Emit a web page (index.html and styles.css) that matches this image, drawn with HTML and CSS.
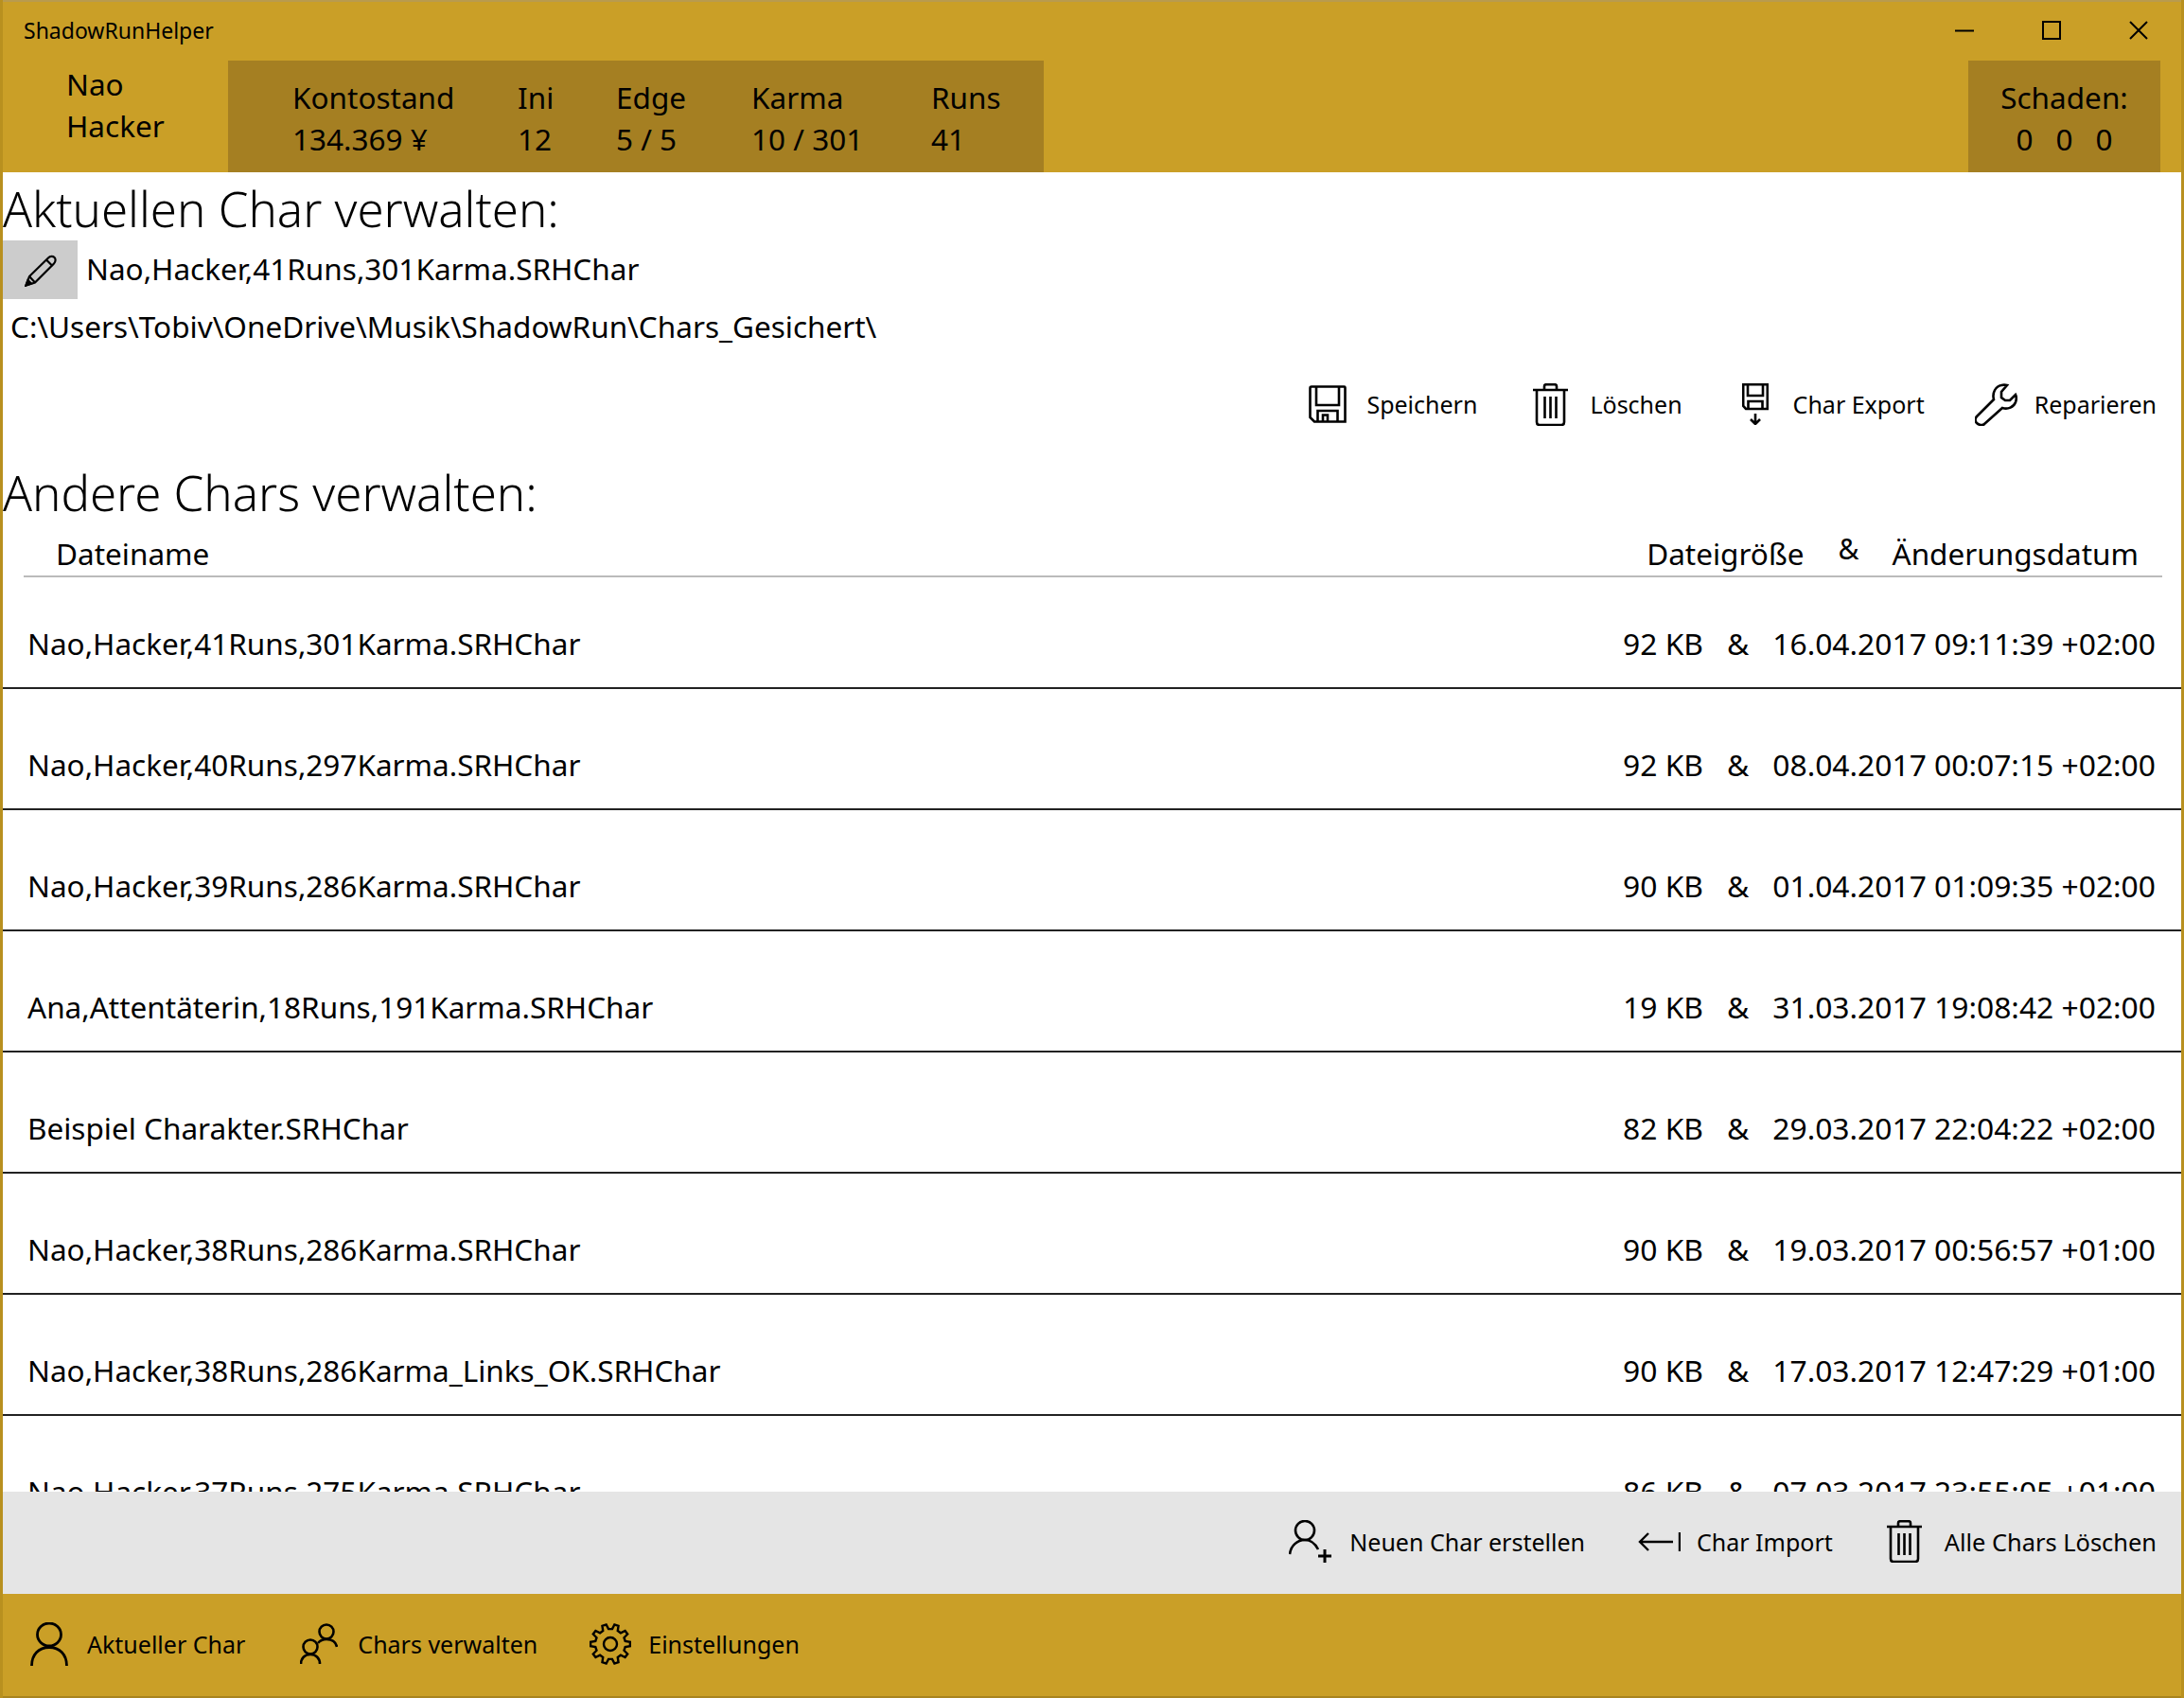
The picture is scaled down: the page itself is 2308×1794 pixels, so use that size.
FILE: index.html
```html
<!DOCTYPE html>
<html lang="de">
<head>
  <meta charset="UTF-8" />
  <title>ShadowRunHelper</title>
  <link rel="stylesheet" href="styles.css">
</head>
<body>
  <div class="window">

    <header class="top">
      <div class="title-row">
        <span class="app-title">ShadowRunHelper</span>
        <div class="win-buttons">
          <svg width="20" height="20" viewBox="0 0 20 20"><path d="M0 10.5H20" stroke="#000" stroke-width="2"/></svg>
          <svg width="20" height="20" viewBox="0 0 20 20"><rect x="1" y="1" width="18" height="18" fill="none" stroke="#000" stroke-width="2"/></svg>
          <svg width="20" height="20" viewBox="0 0 20 20"><path d="M1 1L19 19M19 1L1 19" stroke="#000" stroke-width="2"/></svg>
        </div>
      </div>
      <div class="stats-row">
        <div class="char-name">
          <div>Nao</div>
          <div>Hacker</div>
        </div>
        <div class="stats">
          <div>Kontostand</div><div>Ini</div><div>Edge</div><div>Karma</div><div>Runs</div>
          <div>134.369 ¥</div><div>12</div><div>5 / 5</div><div>10 / 301</div><div>41</div>
        </div>
        <div class="damage">
          <div>Schaden:</div>
          <div class="damage-values"><span>0</span><span>0</span><span>0</span></div>
        </div>
      </div>
    </header>

    <main class="content">
      <h1 class="section-title">Aktuellen Char verwalten:</h1>
      <div class="file-row">
        <button class="rename-btn">
          <svg width="34" height="35" viewBox="0 0 34 35" fill="none" stroke="#000" stroke-width="2.2"><path d="M1.5 33.500L5 24L25 4.500C27 2.500 30 2.500 31.500 4C33 5.500 33 8.500 31 10.500L11 30.500Z"/><path d="M5 24L11 30.500"/><path d="M23 6.500L29.500 13"/><path d="M1.500 33.500L3.500 28L7 31.500Z" fill="#000"/></svg>
        </button>
        <span class="file-name">Nao,Hacker,41Runs,301Karma.SRHChar</span>
      </div>
      <div class="path">C:\Users\Tobiv\OneDrive\Musik\ShadowRun\Chars_Gesichert\</div>

      <div class="actions">
        <div class="action action-save">
          <svg width="40" height="40" viewBox="0 0 40 40" fill="none" stroke="#000" stroke-width="2.6"><path d="M3 1.500H37.500C38 1.500 38.500 2 38.500 2.500V38.500H6L1.500 34V3C1.500 2 2 1.500 3 1.500Z"/><path d="M8 1.500V21H32V1.500"/><path d="M9.500 38.500V27H30.500V38.500"/><path d="M15 38.500V31.500H20V38.500"/></svg>
          <span>Speichern</span>
        </div>
        <div class="action action-delete">
          <svg width="37" height="45" viewBox="0 0 37 45" fill="none" stroke="#000" stroke-width="2.6"><path d="M0 7H37"/><path d="M12 7V3C12 2 13 1.200 14 1.200H23C24 1.200 25 2 25 3V7"/><path d="M4 7V41C4 43 5 44 7 44H30C32 44 33 43 33 41V7"/><path d="M12.500 14V37M18.500 14V37M24.500 14V37"/></svg>
          <span>Löschen</span>
        </div>
        <div class="action action-export">
          <svg width="28" height="44" viewBox="0 0 28 44" fill="none" stroke="#000" stroke-width="2.6"><path d="M1.200 1.200H26.800V27H4L1.200 24Z"/><path d="M6 1.200V13H22V1.200"/><path d="M6.500 27V19H21.500V27"/><path d="M14 32V43M9 38L14 43L19 38"/></svg>
          <span>Char Export</span>
        </div>
        <div class="action action-repair">
          <svg width="45" height="45" viewBox="0 0 45 45" fill="none" stroke="#000" stroke-width="2.6"><path d="M28 2C30 1.500 32 1.500 34 2L28 9V15L32 18H37L43 12C44 14 44 17 43 20C41 25 35 28 29 26L10 43C8 45 4 44 2 42C0 40 0 37 2 35L20 17C18 10 22 3 28 2Z"/></svg>
          <span>Reparieren</span>
        </div>
      </div>

      <h1 class="section-title section-other">Andere Chars verwalten:</h1>
      <div class="list-head">
        <span class="head-name">Dateiname</span>
        <span>Dateigröße</span>
        <span class="head-amp">&amp;</span>
        <span>Änderungsdatum</span>
      </div>

      <div class="rows">
        <div class="row"><span class="row-name">Nao,Hacker,41Runs,301Karma.SRHChar</span><span>92 KB</span><span class="amp">&amp;</span><span>16.04.2017 09:11:39 +02:00</span></div>
        <div class="row"><span class="row-name">Nao,Hacker,40Runs,297Karma.SRHChar</span><span>92 KB</span><span class="amp">&amp;</span><span>08.04.2017 00:07:15 +02:00</span></div>
        <div class="row"><span class="row-name">Nao,Hacker,39Runs,286Karma.SRHChar</span><span>90 KB</span><span class="amp">&amp;</span><span>01.04.2017 01:09:35 +02:00</span></div>
        <div class="row"><span class="row-name">Ana,Attentäterin,18Runs,191Karma.SRHChar</span><span>19 KB</span><span class="amp">&amp;</span><span>31.03.2017 19:08:42 +02:00</span></div>
        <div class="row"><span class="row-name">Beispiel Charakter.SRHChar</span><span>82 KB</span><span class="amp">&amp;</span><span>29.03.2017 22:04:22 +02:00</span></div>
        <div class="row"><span class="row-name">Nao,Hacker,38Runs,286Karma.SRHChar</span><span>90 KB</span><span class="amp">&amp;</span><span>19.03.2017 00:56:57 +01:00</span></div>
        <div class="row"><span class="row-name">Nao,Hacker,38Runs,286Karma_Links_OK.SRHChar</span><span>90 KB</span><span class="amp">&amp;</span><span>17.03.2017 12:47:29 +01:00</span></div>
        <div class="row"><span class="row-name">Nao,Hacker,37Runs,275Karma.SRHChar</span><span>86 KB</span><span class="amp">&amp;</span><span>07.03.2017 23:55:05 +01:00</span></div>
      </div>
    </main>

    <div class="bottom-actions">
      <div class="action action-new">
        <svg width="46" height="46" viewBox="0 0 46 46" fill="none" stroke="#000" stroke-width="2.6"><circle cx="17" cy="11" r="10"/><path d="M1 36C2 27 9 21 17 21C23 21 28 25 31 31"/><path d="M38 31V45M31 38H45" stroke-width="3"/></svg>
        <span>Neuen Char erstellen</span>
      </div>
      <div class="action action-import">
        <svg width="45" height="22" viewBox="0 0 45 22" fill="none" stroke="#000" stroke-width="2.4"><path d="M44 1V21"/><path d="M37 11H2M11 2L2 11L11 20"/></svg>
        <span>Char Import</span>
      </div>
      <div class="action action-clear">
        <svg width="37" height="45" viewBox="0 0 37 45" fill="none" stroke="#000" stroke-width="2.6"><path d="M0 7H37"/><path d="M12 7V3C12 2 13 1.200 14 1.200H23C24 1.200 25 2 25 3V7"/><path d="M4 7V41C4 43 5 44 7 44H30C32 44 33 43 33 41V7"/><path d="M12.500 14V37M18.500 14V37M24.500 14V37"/></svg>
        <span>Alle Chars Löschen</span>
      </div>
    </div>

    <nav class="bottom-nav">
      <div class="action nav-current">
        <svg width="40" height="46" viewBox="0 0 40 46" fill="none" stroke="#000" stroke-width="2.8"><ellipse cx="20" cy="13" rx="12.500" ry="12"/><path d="M1.500 46C1.500 34 9 26.500 20 26.500C31 26.500 38.500 34 38.500 46"/></svg>
        <span>Aktueller Char</span>
      </div>
      <div class="action nav-manage">
        <svg width="40" height="44" viewBox="0 0 40 44" fill="none" stroke="#000" stroke-width="2.6"><circle cx="28" cy="9" r="7.500"/><path d="M39 25C38 20 34 17 28 17C24 17 21 18.500 19 21"/><circle cx="11" cy="25" r="7.500"/><path d="M1 43C1 37 5 33 11 33C17 33 21 37 21 43"/></svg>
        <span>Chars verwalten</span>
      </div>
      <div class="action nav-settings">
        <svg width="44" height="44" viewBox="0 0 44 44" fill="none" stroke="#000" stroke-width="2.4"><polygon points="23.95,6.11 26.37,1.46 30.54,2.81 29.76,8 32.91,10.3 37.6,7.95 40.19,11.5 36.5,15.23 37.71,18.95 42.89,19.8 42.89,24.2 37.71,25.05 36.5,28.77 40.19,32.5 37.6,36.05 32.91,33.7 29.76,36 30.54,41.19 26.37,42.54 23.95,37.89 20.05,37.89 17.63,42.54 13.46,41.19 14.24,36 11.09,33.7 6.4,36.05 3.81,32.5 7.5,28.77 6.29,25.05 1.11,24.2 1.11,19.8 6.29,18.95 7.5,15.23 3.81,11.5 6.4,7.95 11.09,10.3 14.24,8 13.46,2.81 17.63,1.46 20.05,6.11"/><circle cx="22" cy="22" r="7"/></svg>
        <span>Einstellungen</span>
      </div>
    </nav>

  </div>
</body>
</html>
```

FILE: styles.css
```css
* {
  box-sizing: border-box;
}

html, body {
  margin: 0;
  padding: 0;
}

body {
  font-family: "Noto Sans", sans-serif;
  color: #000;
  background: #fff;
}

.window {
  width: 2308px;
  height: 1794px;
  display: flex;
  flex-direction: column;
  border-left: 3px solid #b8901f;
  border-right: 3px solid #b8901f;
  overflow: hidden;
}

/* header */
.top {
  height: 182px;
  margin: 0 -3px;
  background: #ca9f27;
  border-top: 2px solid #b99b4e;
  flex-shrink: 0;
}

.title-row {
  height: 62px;
  display: flex;
  align-items: center;
  justify-content: space-between;
  padding: 0 38px 2px 25px;
}

.app-title {
  font-size: 23px;
}

.win-buttons {
  display: flex;
  gap: 72px;
}

.stats-row {
  display: flex;
  height: 118px;
  font-size: 31.5px;
}

.char-name {
  width: 241px;
  padding: 3px 0 0 70px;
  line-height: 44px;
}

.stats {
  width: 862px;
  height: 118px;
  padding: 17px 0 0 68px;
  background: #a57f22;
  display: grid;
  grid-template-columns: 238px 104px 143px 190px 118px;
  grid-auto-rows: 44px;
  line-height: 44px;
  align-content: start;
}

.damage {
  width: 203px;
  margin-left: auto;
  margin-right: 25px;
  padding-top: 17px;
  background: #a57f22;
  text-align: center;
  line-height: 44px;
}

.damage-values {
  display: flex;
  justify-content: center;
  gap: 24px;
}

/* main part */
.content {
  flex: 1;
  min-height: 0;
  overflow: hidden;
}

.section-title {
  margin: 0;
  font-size: 51px;
  font-weight: 300;
  line-height: 70px;
  height: 72px;
  padding-top: 3px;
}

.file-row {
  display: flex;
  align-items: center;
  gap: 9px;
  height: 62px;
  font-size: 31.5px;
}

.file-name {
  padding-bottom: 3px;
}

.rename-btn {
  width: 79px;
  height: 62px;
  border: none;
  padding: 0;
  background: #ccc;
  display: flex;
  align-items: center;
  justify-content: center;
}

.path {
  font-size: 31.5px;
  line-height: 58px;
  padding-left: 8px;
}

.actions {
  display: flex;
  justify-content: flex-end;
  align-items: center;
  height: 52px;
  margin-top: 27px;
  padding-right: 26px;
}

.action {
  display: flex;
  align-items: center;
  font-size: 25px;
}

.action-save { gap: 21px; }
.action-delete { gap: 23px; margin-left: 59px; }
.action-export { gap: 26px; margin-left: 63px; }
.action-repair { gap: 18px; margin-left: 53px; }

.section-other {
  margin-top: 29px;
}

.list-head {
  display: flex;
  align-items: center;
  height: 46px;
  margin: 10px 20px 0 22px;
  padding: 0 25px 4px 34px;
  font-size: 31.5px;
  border-bottom: 2px solid #bbb;
}

.head-name {
  margin-right: auto;
}

.head-amp {
  margin: -10px 35px 0 36px;
  font-size: 30px;
}

.rows {
  font-size: 31.8px;
}

.row {
  display: flex;
  align-items: center;
  height: 128px;
  padding: 32px 27px 0 26px;
  border-bottom: 2px solid #222;
}

.row:first-child {
  height: 118px;
  padding-top: 22px;
}

.row-name {
  margin-right: auto;
  font-size: 31.5px;
}

.amp {
  margin: 0 25px;
}

/* bottom bars */
.bottom-actions {
  height: 108px;
  flex-shrink: 0;
  background: #e5e5e5;
  display: flex;
  justify-content: flex-end;
  align-items: center;
  padding: 0 26px 3px 0;
}

.action-new { gap: 18px; }
.action-import { gap: 17px; margin-left: 56px; }
.action-clear { gap: 24px; margin-left: 57px; font-size: 25.4px; }

.bottom-nav {
  height: 110px;
  flex-shrink: 0;
  margin: 0 -3px;
  background: #ca9f27;
  border-bottom: 2px solid #a8841f;
  display: flex;
  align-items: center;
  padding: 0 0 2px 32px;
}

.nav-current { gap: 20px; }
.nav-manage { gap: 21px; margin-left: 58px; }
.nav-settings { gap: 18px; margin-left: 55px; }
```
